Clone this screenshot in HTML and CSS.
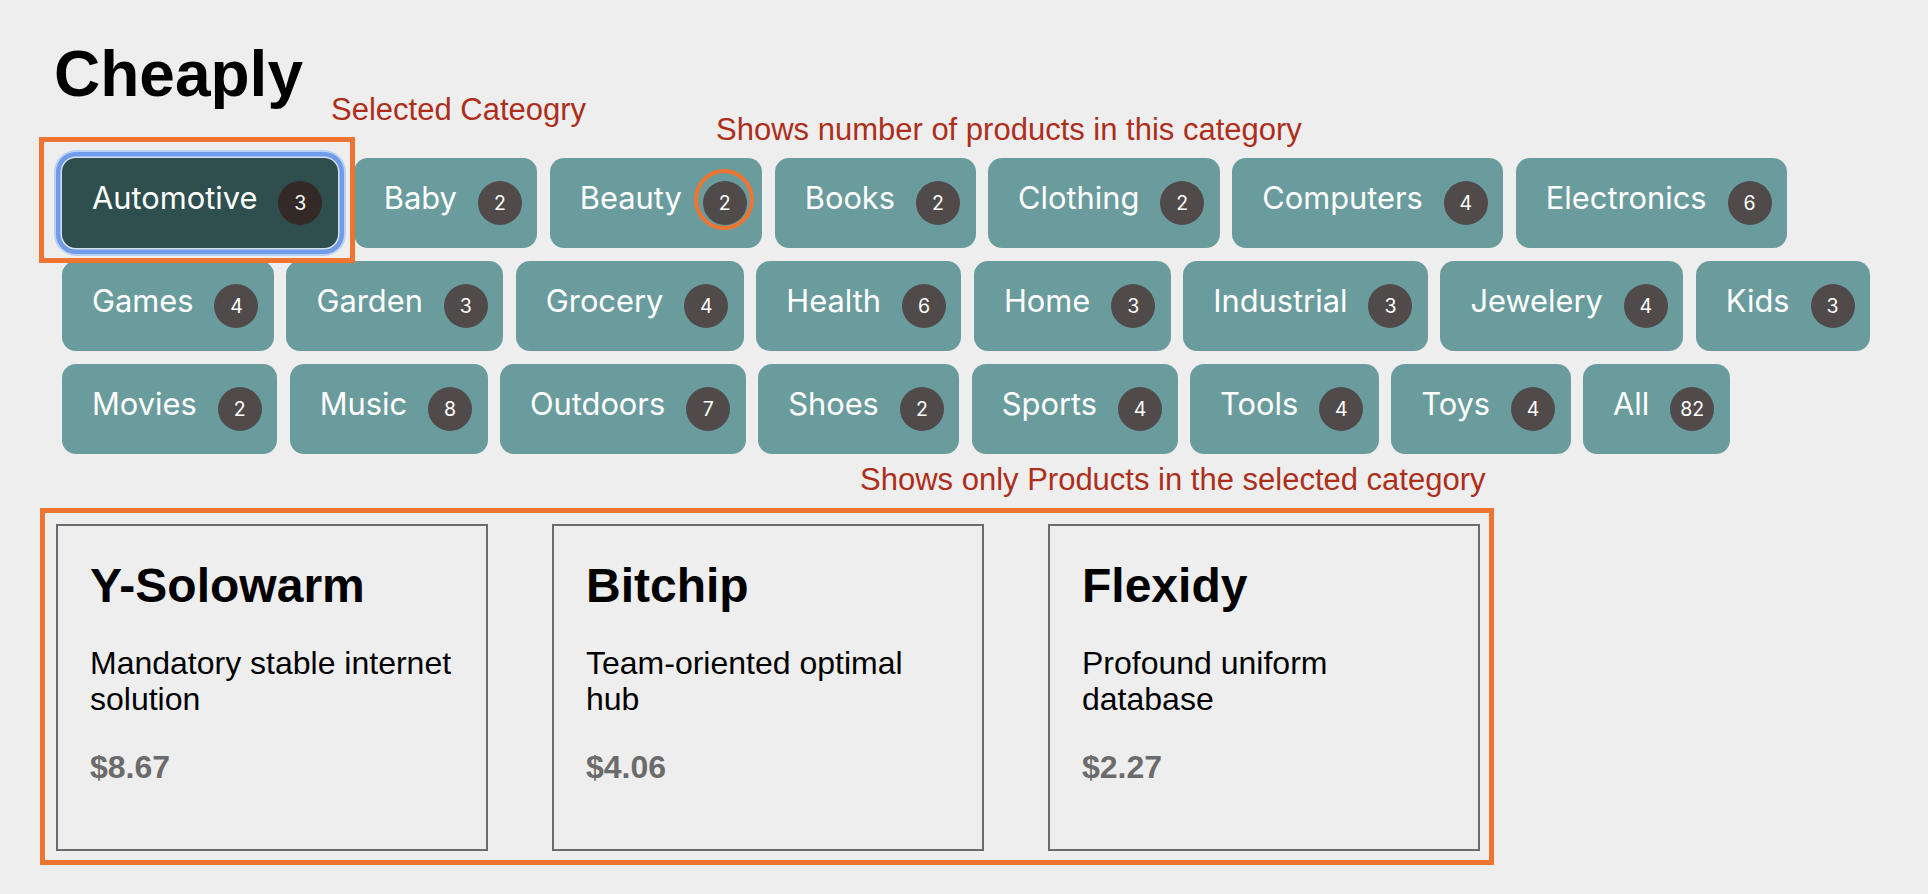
FILE: index.html
```html
<!DOCTYPE html>
<html lang="en">
<head>
<meta charset="utf-8">
<title>Cheaply</title>
<link rel="stylesheet" href="styles.css">
</head>
<body>
<div class="page">
  <h1 class="title">Cheaply</h1>

  <nav class="categories">
    <button class="cat selected"><span class="cat-name">Automotive</span><span class="count">3</span></button>
    <button class="cat"><span class="cat-name">Baby</span><span class="count">2</span></button>
    <button class="cat"><span class="cat-name">Beauty</span><span class="count">2</span></button>
    <button class="cat"><span class="cat-name">Books</span><span class="count">2</span></button>
    <button class="cat"><span class="cat-name">Clothing</span><span class="count">2</span></button>
    <button class="cat"><span class="cat-name">Computers</span><span class="count">4</span></button>
    <button class="cat"><span class="cat-name">Electronics</span><span class="count">6</span></button>
    <button class="cat"><span class="cat-name">Games</span><span class="count">4</span></button>
    <button class="cat"><span class="cat-name">Garden</span><span class="count">3</span></button>
    <button class="cat"><span class="cat-name">Grocery</span><span class="count">4</span></button>
    <button class="cat"><span class="cat-name">Health</span><span class="count">6</span></button>
    <button class="cat"><span class="cat-name">Home</span><span class="count">3</span></button>
    <button class="cat"><span class="cat-name">Industrial</span><span class="count">3</span></button>
    <button class="cat"><span class="cat-name">Jewelery</span><span class="count">4</span></button>
    <button class="cat"><span class="cat-name">Kids</span><span class="count">3</span></button>
    <button class="cat"><span class="cat-name">Movies</span><span class="count">2</span></button>
    <button class="cat"><span class="cat-name">Music</span><span class="count">8</span></button>
    <button class="cat"><span class="cat-name">Outdoors</span><span class="count">7</span></button>
    <button class="cat"><span class="cat-name">Shoes</span><span class="count">2</span></button>
    <button class="cat"><span class="cat-name">Sports</span><span class="count">4</span></button>
    <button class="cat"><span class="cat-name">Tools</span><span class="count">4</span></button>
    <button class="cat"><span class="cat-name">Toys</span><span class="count">4</span></button>
    <button class="cat"><span class="cat-name">All</span><span class="count">82</span></button>
  </nav>

  <section class="products">
    <article class="card">
      <h2 class="card-title">Y-Solowarm</h2>
      <p class="card-desc">Mandatory stable internet solution</p>
      <p class="card-price">$8.67</p>
    </article>
    <article class="card">
      <h2 class="card-title">Bitchip</h2>
      <p class="card-desc">Team-oriented optimal hub</p>
      <p class="card-price">$4.06</p>
    </article>
    <article class="card">
      <h2 class="card-title">Flexidy</h2>
      <p class="card-desc">Profound uniform database</p>
      <p class="card-price">$2.27</p>
    </article>
  </section>

  <div class="mark mark-selected"></div>
  <div class="mark-circle"></div>
  <div class="mark mark-products"></div>
  <p class="note note-selected">Selected Cateogry</p>
  <p class="note note-count">Shows number of products in this category</p>
  <p class="note note-products">Shows only Products in the selected category</p>
</div>
</body>
</html>
```

FILE: styles.css
```css
html, body {
  margin: 0;
  padding: 0;
  background: #eeeeee;
}

.page {
  position: relative;
  min-height: 894px;
  padding-top: 37px;
  box-sizing: border-box;
  font-family: "Liberation Sans", Arial, sans-serif;
  color: #000;
}

.title {
  margin: 0 0 0 54px;
  font-size: 64px;
  line-height: 74px;
  font-weight: 700;
}

.categories {
  margin: 47px 0 0 62px;
  width: 1860px;
  display: flex;
  flex-wrap: wrap;
  gap: 13px 12.5px;
}

.cat {
  height: 90px;
  display: flex;
  align-items: center;
  padding: 0 15.5px 0 30px;
  border: none;
  border-radius: 14px;
  background: #6b9c9d;
  color: #ffffff;
  font-family: Inter, "Noto Sans", sans-serif;
  font-size: 30.8px;
  cursor: pointer;
}

.cat-name {
  margin-bottom: 11px;
  line-height: 38px;
}

.count {
  width: 44px;
  height: 44px;
  margin-left: 21px;
  border-radius: 50%;
  background: #504b4a;
  color: #ffffff;
  font-size: 19.5px;
  line-height: 44px;
  text-align: center;
}

.selected {
  background: #2f4f4f;
  margin-right: 3.5px;
  box-shadow: 0 0 0 1.5px #d6def0, 0 0 0 6px #6f9be9, 0 0 0 8px #bcd0f3;
}

.selected .count {
  background: #332927;
}

.products {
  display: flex;
  gap: 64px;
  margin: 70px 0 0 56px;
}

.card {
  width: 364px;
  padding: 32px;
  border: 2px solid #6b6b6b;
}

.card-title {
  margin: 0 0 32px;
  font-size: 48px;
  line-height: 55px;
  font-weight: 700;
}

.card-desc {
  margin: 32px 0;
  font-size: 32px;
  line-height: 36px;
}

.card-price {
  margin: 32px 0;
  font-size: 32px;
  line-height: 36px;
  font-weight: 700;
  color: #6b6b6b;
}

/* annotation overlay */
.mark {
  position: absolute;
  box-sizing: border-box;
  border: 5px solid #ee7431;
}

.mark-selected {
  left: 39px;
  top: 137px;
  width: 316px;
  height: 126px;
}

.mark-products {
  left: 40px;
  top: 508px;
  width: 1454px;
  height: 357px;
}

.mark-circle {
  position: absolute;
  box-sizing: border-box;
  left: 694px;
  top: 169px;
  width: 60px;
  height: 61px;
  border: 4.5px solid #ee7431;
  border-radius: 50%;
}

.note {
  position: absolute;
  margin: 0;
  font-family: "Liberation Sans", Arial, sans-serif;
  font-size: 31px;
  line-height: 36px;
  color: #ad2e1b;
  white-space: nowrap;
}

.note-selected {
  left: 331px;
  top: 92px;
}

.note-count {
  left: 716px;
  top: 112px;
}

.note-products {
  left: 860px;
  top: 462px;
}
```
